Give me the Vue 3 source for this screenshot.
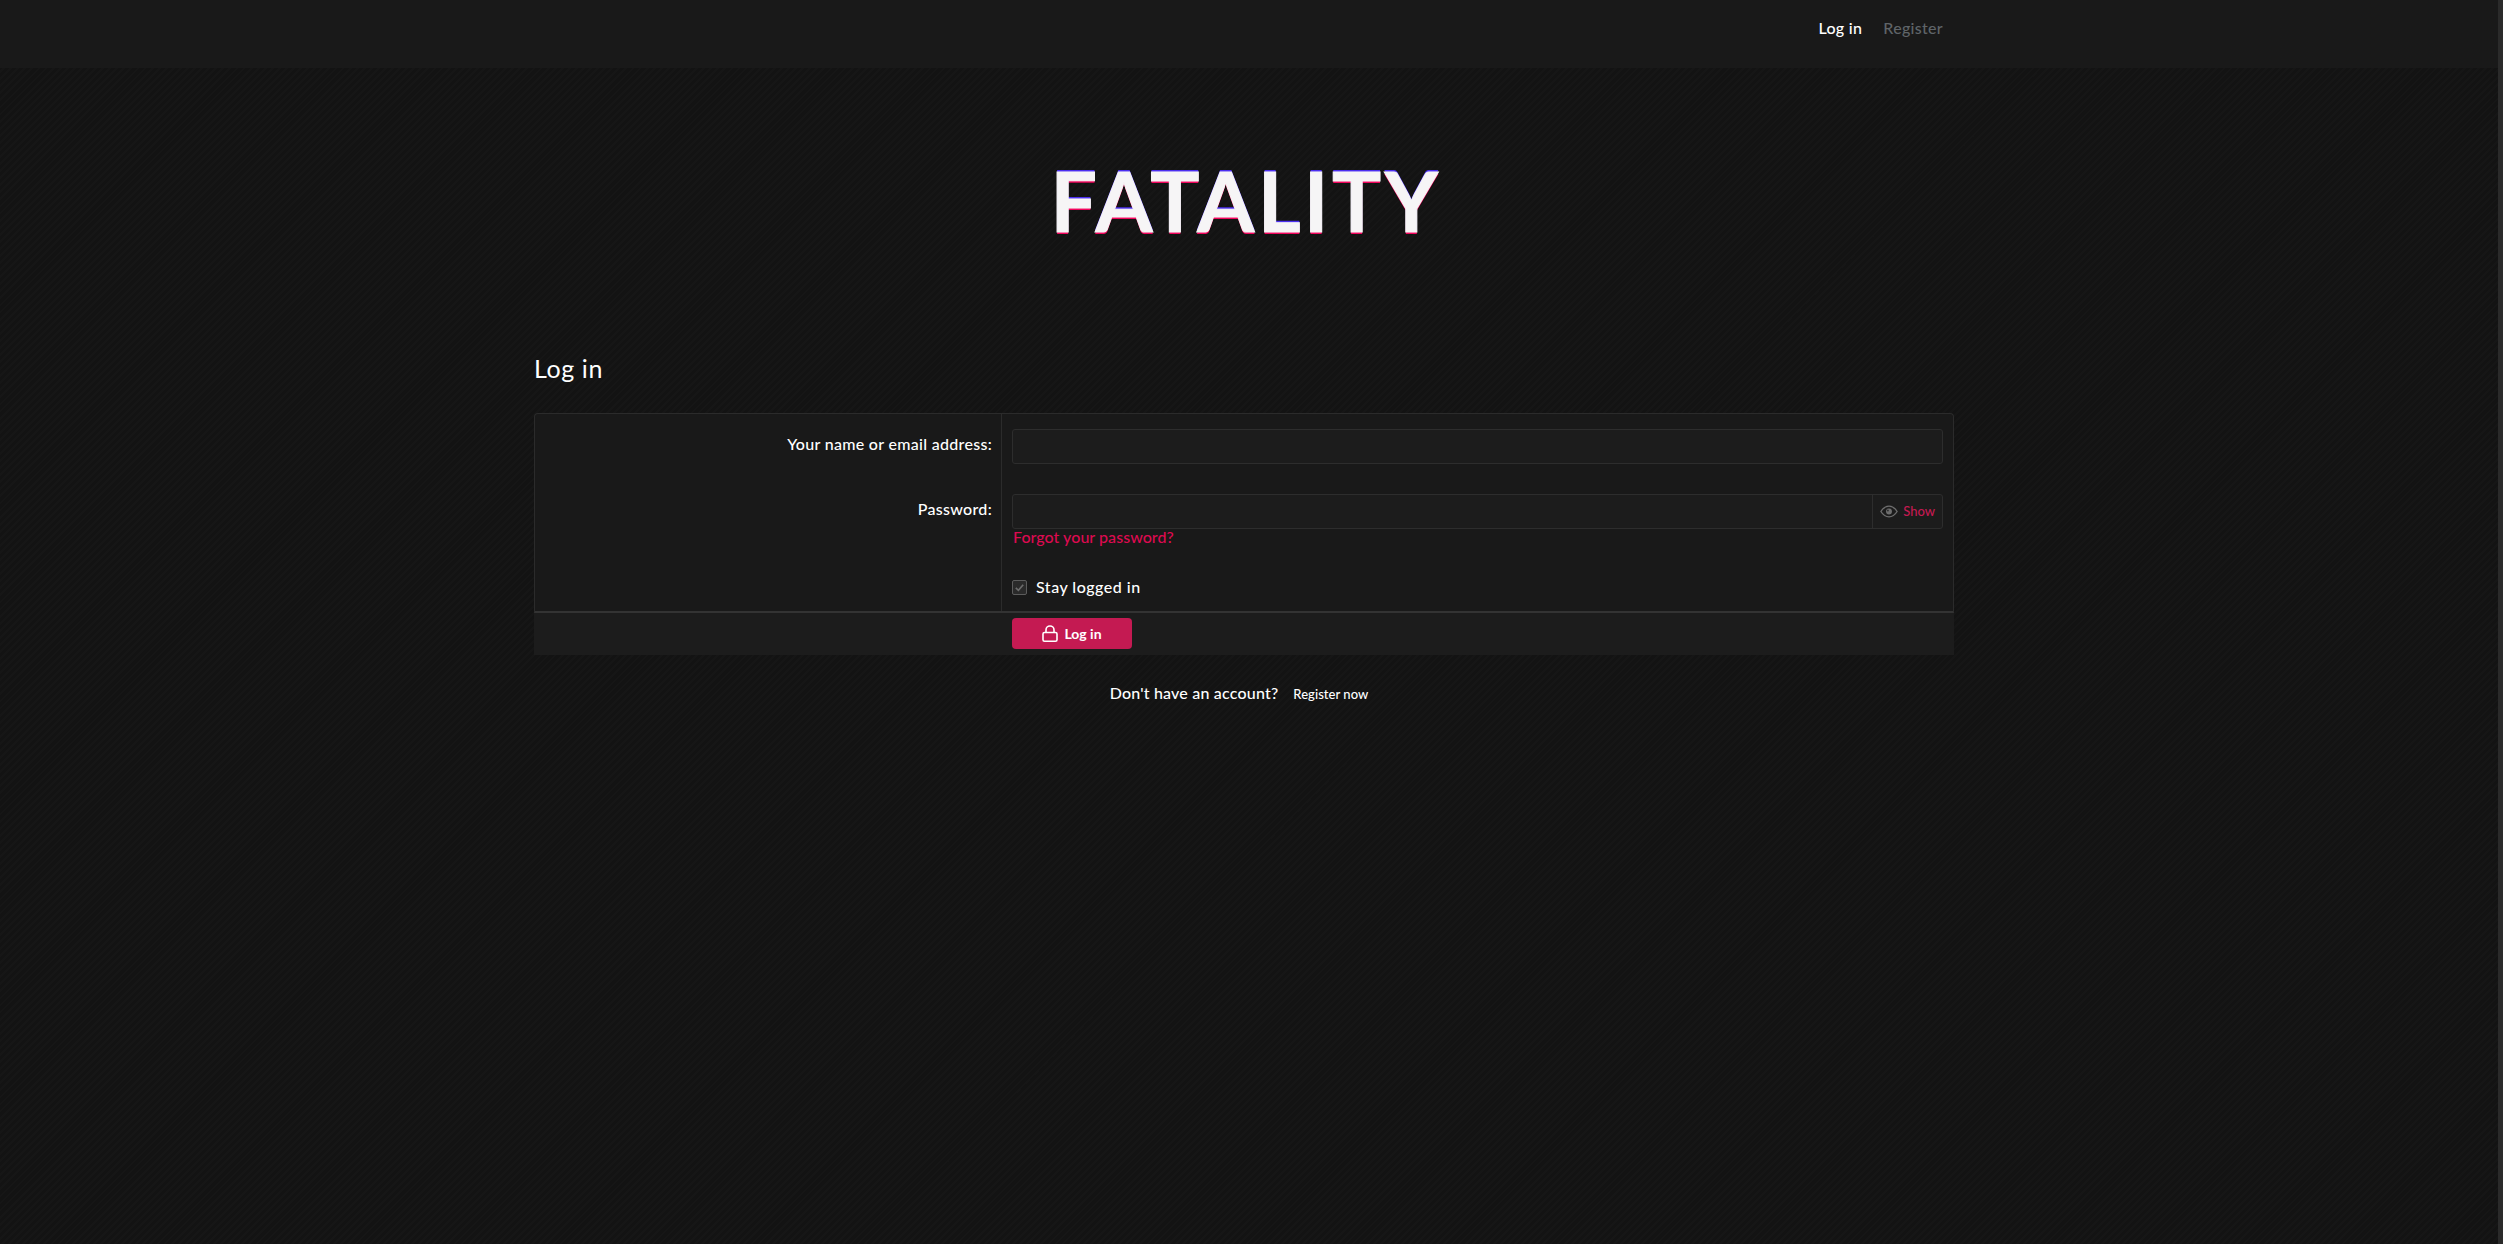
<script setup>
const appName = 'FATALITY'
</script>

<template>
  <div class="page">
    <header class="topbar">
      <nav class="topnav">
        <a class="nav-link nav-active">Log in</a>
        <a class="nav-link nav-muted">Register</a>
      </nav>
    </header>

    <div class="logo-row">
      <div class="logo">{{ appName }}</div>
    </div>

    <main class="content">
      <h1 class="title">Log in</h1>

      <form class="block" @submit.prevent>
        <div class="rows">
          <div class="row row-name">
            <div class="label">Your name or email address:</div>
            <div class="field">
              <div class="input"></div>
            </div>
          </div>
          <div class="row row-pass">
            <div class="label">Password:</div>
            <div class="field">
              <div class="input input-group">
                <div class="input-main"></div>
                <div class="show">
                  <svg class="eye" viewBox="0 0 20 14" fill="none">
                    <path d="M1 7C3.5 3 6.5 1 10 1s6.5 2 9 6c-2.500 4-5.500 6-9 6S3.500 11 1 7Z" stroke="#6e6e6e" stroke-width="1.500"/>
                    <circle cx="10" cy="7" r="3.300" fill="#6e6e6e"/>
                    <circle cx="8.800" cy="5.900" r="1" fill="#2a2a2a"/>
                  </svg>
                  <span class="show-text">Show</span>
                </div>
              </div>
              <a class="forgot">Forgot your password?</a>
            </div>
          </div>
          <div class="row row-stay">
            <div class="label"></div>
            <div class="field stay">
              <span class="checkbox">
                <svg viewBox="0 0 14 14" fill="none">
                  <path d="M3 7.500 5.800 10 11 4" stroke="#6c6c6c" stroke-width="1.800"/>
                </svg>
              </span>
              <span class="stay-text">Stay logged in</span>
            </div>
          </div>
        </div>
        <div class="footer">
          <div class="footer-spacer"></div>
          <button class="submit" type="submit">
            <svg class="lock" viewBox="0 0 16 17" fill="none">
              <path d="M4 7.500V5a4 4 0 0 1 8 0v2.500" stroke="#fff" stroke-width="1.600"/>
              <rect x="1" y="7.500" width="14" height="8.700" rx="1.500" stroke="#fff" stroke-width="1.600"/>
            </svg>
            <span>Log in</span>
          </button>
        </div>
      </form>

      <div class="register">
        <span class="register-q">Don't have an account?</span>
        <a class="register-link">Register now</a>
      </div>
    </main>
    <div class="scroll-strip"></div>
  </div>
</template>

<style>
html, body { margin: 0; background: #141414; }
</style>

<style scoped>
.page {
  position: relative;
  min-height: 1244px;
  box-sizing: border-box;
  background-color: #141414;
  background-image: repeating-linear-gradient(135deg, #161616 0 2px, #131313 2px 5px);
  color: #fff;
  font-family: Lato, "Open Sans", sans-serif;
  font-weight: 500;
}
.scroll-strip {
  position: absolute;
  top: 0;
  right: 0;
  bottom: 0;
  width: 5px;
  background: #2a2a2a;
}
.topbar {
  height: 68px;
  background: #191919;
  padding-right: 15px;
}
.topnav {
  width: 1420px;
  height: 55px;
  margin: 0 auto;
  display: flex;
  justify-content: flex-end;
  align-items: center;
  gap: 21px;
  padding-right: 11px;
  box-sizing: border-box;
  font-size: 16px;
  letter-spacing: 0.3px;
}
.nav-active { color: #fff; }
.nav-muted { color: #5f6468; }
.logo-row {
  padding-right: 15px;
  height: 272px;
  display: flex;
  justify-content: center;
  align-items: flex-start;
  padding-top: 91px;
  box-sizing: border-box;
}
.logo {
  font-size: 82px;
  line-height: 1;
  font-weight: 700;
  letter-spacing: 3.600px;
  color: #f6f5f6;
  -webkit-text-stroke: 1px #f6f5f6;
  text-shadow: 0 -2px 0 #4b2ff0, 0 2px 0 #f2045c;
  margin-left: 4px;
}
.content {
  width: 1420px;
  margin: 0 auto;
  position: relative;
  left: -7.500px;
}
.title {
  margin: 0;
  height: 60px;
  padding-top: 13px;
  font-size: 25px;
  line-height: 30px;
  font-weight: 400;
  letter-spacing: 0.6px;
  color: #fff;
}
.block { display: block; }
.rows {
  height: 200px;
  box-sizing: border-box;
  background: #191919;
  border: 1px solid #2b2b2b;
  border-bottom: 2px solid #333;
  border-radius: 4px 4px 0 0;
}
.row { display: flex; }
.row-name { height: 65px; }
.row-pass { height: 81px; }
.row-stay { height: 51px; }
.label {
  width: 467px;
  flex: none;
  box-sizing: border-box;
  border-right: 1px solid #2b2b2b;
  text-align: right;
  padding-right: 9px;
  padding-top: 20px;
  font-size: 16px;
  line-height: 20px;
  letter-spacing: 0.3px;
}
.field {
  flex: 1;
  padding: 15px 10px 0 10px;
}
.input {
  height: 35px;
  box-sizing: border-box;
  background: #1c1c1c;
  border: 1px solid #2d2d2d;
  border-radius: 3px;
}
.input-group { display: flex; }
.input-main { flex: 1; }
.show {
  width: 70px;
  box-sizing: border-box;
  border-left: 1px solid #2d2d2d;
  display: flex;
  align-items: center;
  justify-content: flex-end;
  gap: 5px;
  padding-right: 7px;
}
.eye { width: 18px; height: 13px; flex: none; }
.show-text {
  font-size: 13px;
  line-height: 14px;
  margin-top: -2px;
  color: #c41a52;
}
.row-pass .field { padding-top: 0; }
.row-pass .input { margin-top: 15px; }
.row-pass .label { padding-top: 20px; }
.forgot {
  display: block;
  margin-left: 1px;
  font-size: 16px;
  line-height: 16px;
  letter-spacing: 0.05px;
  color: #dd0a50;
}
.stay {
  display: flex;
  align-items: flex-start;
  gap: 9px;
  padding-top: 19px;
}
.checkbox {
  width: 15px;
  height: 15px;
  box-sizing: border-box;
  background: #2a2a2a;
  border: 1px solid #5c5c5c;
  border-radius: 2px;
  margin-top: 1px;
  flex: none;
}
.checkbox svg { display: block; width: 13px; height: 13px; }
.stay-text {
  font-size: 16px;
  line-height: 16px;
  letter-spacing: 0.5px;
}
.footer {
  height: 42px;
  box-sizing: border-box;
  background: #1c1c1c;
  display: flex;
  padding-top: 5px;
}
.footer-spacer { width: 478px; flex: none; }
.submit {
  width: 120px;
  height: 31px;
  border: 0;
  border-radius: 4px;
  padding: 0;
  background: #c41a52;
  color: #fff;
  font: inherit;
  font-size: 14px;
  font-weight: 700;
  display: flex;
  align-items: center;
  justify-content: center;
  gap: 6px;
}
.lock { width: 16px; height: 17px; flex: none; }
.register {
  display: flex;
  justify-content: center;
  align-items: baseline;
  gap: 15px;
  padding-top: 28px;
  padding-right: 10px;
}
.register-q { font-size: 16px; letter-spacing: 0.2px; line-height: 20px; }
.register-link { font-size: 13px; letter-spacing: 0.05px; }
</style>
